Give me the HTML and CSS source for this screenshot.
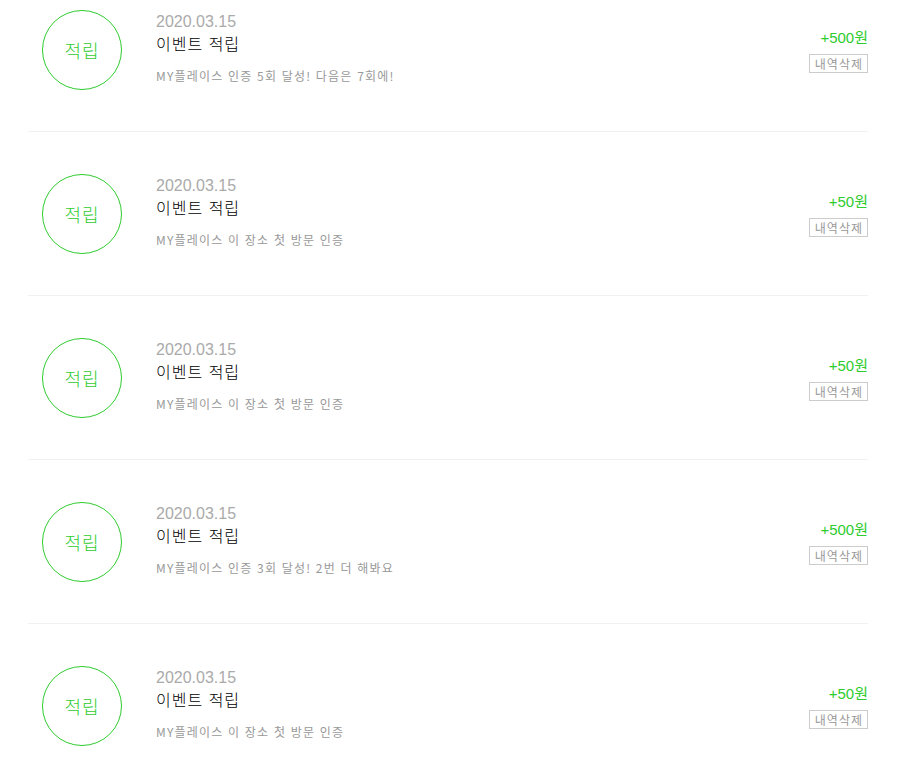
FILE: index.html
```html
<!DOCTYPE html>
<html lang="ko">
<head>
<meta charset="utf-8">
<link rel="stylesheet" href="styles.css">
</head>
<body>
<ul class="list">
  <li class="item">
    <div class="badge">적립</div>
    <div class="info">
      <div class="date">2020.03.15</div>
      <div class="title">이벤트 적립</div>
      <div class="desc">MY플레이스 인증 5회 달성! 다음은 7회에!</div>
    </div>
    <div class="side">
      <div class="amount">+500원</div>
      <button class="del">내역삭제</button>
    </div>
  </li>
  <li class="item">
    <div class="badge">적립</div>
    <div class="info">
      <div class="date">2020.03.15</div>
      <div class="title">이벤트 적립</div>
      <div class="desc">MY플레이스 이 장소 첫 방문 인증</div>
    </div>
    <div class="side">
      <div class="amount">+50원</div>
      <button class="del">내역삭제</button>
    </div>
  </li>
  <li class="item">
    <div class="badge">적립</div>
    <div class="info">
      <div class="date">2020.03.15</div>
      <div class="title">이벤트 적립</div>
      <div class="desc">MY플레이스 이 장소 첫 방문 인증</div>
    </div>
    <div class="side">
      <div class="amount">+50원</div>
      <button class="del">내역삭제</button>
    </div>
  </li>
  <li class="item">
    <div class="badge">적립</div>
    <div class="info">
      <div class="date">2020.03.15</div>
      <div class="title">이벤트 적립</div>
      <div class="desc">MY플레이스 인증 3회 달성! 2번 더 해봐요</div>
    </div>
    <div class="side">
      <div class="amount">+500원</div>
      <button class="del">내역삭제</button>
    </div>
  </li>
  <li class="item">
    <div class="badge">적립</div>
    <div class="info">
      <div class="date">2020.03.15</div>
      <div class="title">이벤트 적립</div>
      <div class="desc">MY플레이스 이 장소 첫 방문 인증</div>
    </div>
    <div class="side">
      <div class="amount">+50원</div>
      <button class="del">내역삭제</button>
    </div>
  </li>
</ul>
</body>
</html>
```
FILE: styles.css
```css
html, body {
  margin: 0;
  padding: 0;
  background: #fff;
  overflow: hidden;
}
body {
  font-family: "Noto Sans CJK KR", "Noto Sans", sans-serif;
  color: #000;
}
.list {
  list-style: none;
  margin: -32px 0 0 28px;
  padding: 0;
  width: 840px;
}
.item {
  display: flex;
  align-items: flex-start;
  padding: 42px 0 41px 14px;
  border-bottom: 1px solid #f0f0f0;
}
.badge {
  flex: none;
  width: 78px;
  height: 78px;
  border: 1px solid #2ecc2e;
  border-radius: 50%;
  display: flex;
  align-items: center;
  justify-content: center;
  color: #2ecc2e;
  font-size: 18px;
  font-weight: 300;
  letter-spacing: 1px;
  line-height: 1;
}
.info {
  flex: 1;
  margin-left: 34px;
}
.date {
  font-family: "Liberation Sans", "Noto Sans CJK KR", sans-serif;
  color: #aaa;
  font-size: 16px;
  line-height: 18px;
  margin-top: 3px;
  height: 18px;
}
.title {
  font-size: 16px;
  font-weight: 300;
  letter-spacing: 1px;
  line-height: 24px;
  height: 35px;
}
.desc {
  color: #999;
  font-size: 12px;
  line-height: 18px;
  letter-spacing: 1.2px;
  margin-top: 1px;
}
.side {
  flex: none;
  display: flex;
  flex-direction: column;
  align-items: flex-end;
  margin-top: 19px;
}
.amount {
  color: #2ecc2e;
  font-size: 15px;
  line-height: 18px;
  font-family: "Liberation Sans", "Noto Sans CJK KR", sans-serif;
}
.del {
  margin-top: 7px;
  border: 1px solid #ccc;
  background: #fff;
  color: #999;
  font-family: "Noto Sans CJK KR", sans-serif;
  font-size: 12px;
  letter-spacing: 1px;
  line-height: 16px;
  padding: 0 4px 0 5px;
  height: 19px;
  cursor: pointer;
}
```
